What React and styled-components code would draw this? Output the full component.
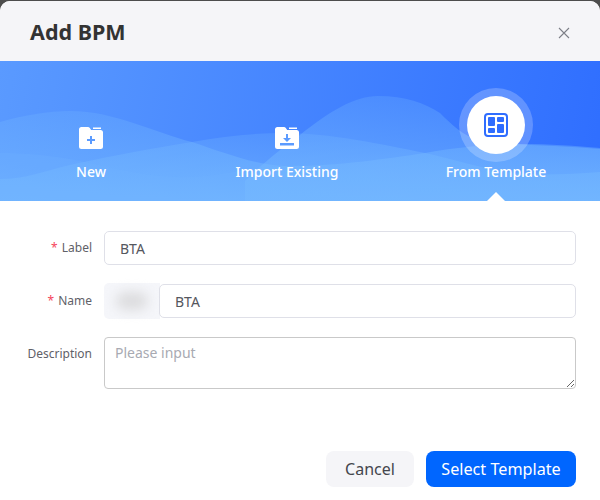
import React from "react";
import styled, { createGlobalStyle } from "styled-components";

const GlobalStyle = createGlobalStyle`
  html, body {
    margin: 0;
    padding: 0;
    height: 100%;
    background: #4d4d4d;
    overflow: hidden;
  }
  * {
    box-sizing: border-box;
  }
`;

const Modal = styled.div`
  margin-top: 1px;
  width: 600px;
  height: 499px;
  display: flex;
  flex-direction: column;
  background: #fff;
  border-radius: 10px 10px 0 0;
  overflow: hidden;
  font-family: "Noto Sans", "Open Sans", sans-serif;
`;

const Header = styled.div`
  height: 60px;
  flex-shrink: 0;
  display: flex;
  align-items: center;
  justify-content: space-between;
  padding: 0 30px;
  background: #f5f5f8;
`;

const Title = styled.div`
  font-size: 21.5px;
  font-weight: 700;
  color: #333;
`;

const Close = styled.svg`
  width: 12px;
  height: 12px;
  margin-top: 3px;
  stroke: #7d7f88;
  stroke-width: 1.1;
  fill: none;
`;

const Banner = styled.div`
  position: relative;
  height: 140px;
  flex-shrink: 0;
  display: grid;
  grid-template-columns: 182px 210px 208px;
  background: linear-gradient(100deg, #5a9aff 0%, #2f6eff 100%);
`;

const Waves = styled.svg`
  position: absolute;
  inset: 0;
  width: 600px;
  height: 140px;
`;

const Tab = styled.div`
  position: relative;
  display: flex;
  flex-direction: column;
  align-items: center;
  justify-content: flex-end;
  padding-bottom: 19px;
  color: #fff;
  font-size: 14px;
  font-weight: 500;
  line-height: 20px;
`;

const FolderIcon = styled.svg`
  width: 24px;
  height: 22px;
  margin-bottom: 13px;
`;

const ActiveCircle = styled.div`
  width: 58px;
  height: 58px;
  margin-bottom: 8px;
  display: flex;
  align-items: center;
  justify-content: center;
  border-radius: 50%;
  background: #fff;
  box-shadow: 0 0 0 8px rgba(255, 255, 255, 0.22);
`;

const Arrow = styled.div`
  position: absolute;
  bottom: 0;
  left: 50%;
  transform: translateX(-50%);
  width: 0;
  height: 0;
  border-left: 9px solid transparent;
  border-right: 9px solid transparent;
  border-bottom: 9px solid #fff;
`;

const Form = styled.div`
  flex: 1;
  display: flex;
  flex-direction: column;
  padding: 30px 24px 13px 0;
`;

const Row = styled.div`
  display: grid;
  grid-template-columns: 92px 1fr;
  column-gap: 12px;
  margin-bottom: 19px;
`;

const Label = styled.label`
  height: 34px;
  padding-bottom: 2px;
  display: flex;
  align-items: center;
  justify-content: flex-end;
  font-size: 12px;
  color: #5f6168;
`;

const Star = styled.span`
  color: #f5455c;
  margin-right: 4px;
`;

const TextInput = styled.input`
  width: 100%;
  height: 34px;
  padding: 0 15px;
  border: 1px solid #dfe0e8;
  border-radius: 5px;
  outline: none;
  background: #fff;
  font-family: inherit;
  font-size: 14px;
  color: #55575e;
`;

const NameGroup = styled.div`
  height: 34px;
  display: flex;
  align-items: center;
`;

const Prefix = styled.div`
  width: 56px;
  height: 36px;
  flex-shrink: 0;
  margin-right: -1px;
  display: flex;
  align-items: center;
  justify-content: center;
  background: #f5f6fa;
  border-radius: 5px 0 0 5px;
`;

const Blurred = styled.div`
  width: 32px;
  height: 18px;
  border-radius: 9px;
  background: #dcdcde;
  filter: blur(6px);
`;

const TextArea = styled.textarea`
  display: block;
  width: 100%;
  height: 52px;
  padding: 5px 10px;
  border: 1px solid #c9c9c9;
  border-radius: 4px;
  outline: none;
  resize: vertical;
  font-family: inherit;
  font-size: 14px;
  color: #55575e;

  &::placeholder {
    color: #a8aab2;
  }
`;

const Footer = styled.div`
  margin-top: auto;
  display: flex;
  justify-content: flex-end;
  gap: 12px;
`;

const Button = styled.button`
  height: 36px;
  padding: 0;
  width: ${(p) => p.$width}px;
  border: none;
  border-radius: 8px;
  font-family: inherit;
  font-size: ${(p) => (p.$primary ? 16.2 : 16)}px;
  background: ${(p) => (p.$primary ? "#0066ff" : "#f5f5f8")};
  color: ${(p) => (p.$primary ? "#fff" : "#44464d")};
`;

const Folder = ({ children }) => (
  <FolderIcon viewBox="0 0 24 22">
    <path
      d="M2.5 0H9c.8 0 1.3.3 1.8 1l1.4 2H21.5A2.5 2.5 0 0 1 24 5.5V19.5A2.5 2.5 0 0 1 21.5 22H2.5A2.5 2.5 0 0 1 0 19.5V2.5A2.5 2.5 0 0 1 2.5 0Z"
      fill="#fff"
    />
    <rect x="14" y="0.5" width="8" height="1.5" fill="#fff" />
    {children}
  </FolderIcon>
);

export default function App() {
  return (
    <>
      <GlobalStyle />
      <Modal>
        <Header>
          <Title>Add BPM</Title>
          <Close viewBox="0 0 12 12">
            <path d="M1 1l10 10M11 1L1 11" />
          </Close>
        </Header>
        <Banner>
          <Waves viewBox="0 0 600 140">
            <defs>
              <linearGradient id="wave" x1="0" y1="0" x2="0" y2="1">
                <stop offset="0" stopColor="#74b8ff" stopOpacity="0.25" />
                <stop offset="1" stopColor="#74b8ff" stopOpacity="0.65" />
              </linearGradient>
            </defs>
            {/* hill on the right */}
            <path
              d="M245 120C265 100 285 85 300 74C330 50 355 35 378 35C405 35 425 42 440 52C452 64 462 74 480 80C520 85 560 84 600 88V140H245Z"
              fill="url(#wave)"
            />
            {/* long wave from the left peak */}
            <path
              d="M0 61C25 54 48 50 70 50C115 50 155 72 192 81C225 92 255 104 285 105C330 106 385 98 425 92C460 86 490 83 520 83C550 83 575 85 600 87V140H0Z"
              fill="url(#wave)"
            />
            {/* wave rising to the middle */}
            <path
              d="M0 118C25 118 45 110 70 104C115 94 155 87 192 81C225 75 255 72 285 72C330 72 385 84 425 92C460 100 490 110 525 113C550 114 575 113 600 111V140H0Z"
              fill="url(#wave)"
            />
            <path
              d="M0 92C25 92 45 94 70 98C100 104 130 112 160 115C190 118 215 115 250 108C265 106 285 105 300 104V140H0Z"
              fill="#74b8ff"
              opacity="0.18"
            />
          </Waves>
          <Tab>
            <Folder>
              <path d="M11 9h2v3h3v2h-3v3h-2v-3H8v-2h3Z" fill="#5b9bff" />
            </Folder>
            New
          </Tab>
          <Tab>
            <Folder>
              <path
                d="M11 7h2v4h3l-4 4-4-4h3ZM5 16h14v2.5H5Z"
                fill="#5b9bff"
              />
            </Folder>
            Import Existing
          </Tab>
          <Tab>
            <ActiveCircle>
              <svg width="24" height="24" viewBox="0 0 24 24">
                <rect x="1" y="1" width="22" height="22" rx="3" fill="none" stroke="#2f6dff" strokeWidth="2" />
                <rect x="4" y="4" width="7" height="9" rx="1" fill="#2f6dff" />
                <rect x="13" y="4" width="7" height="5" rx="1" fill="#2f6dff" />
                <rect x="4" y="15" width="7" height="5" rx="1" fill="#2f6dff" />
                <rect x="13" y="11" width="7" height="9" rx="1" fill="#2f6dff" />
              </svg>
            </ActiveCircle>
            From Template
            <Arrow />
          </Tab>
        </Banner>
        <Form>
          <Row>
            <Label>
              <Star>*</Star>Label
            </Label>
            <TextInput defaultValue="BTA" />
          </Row>
          <Row>
            <Label>
              <Star>*</Star>Name
            </Label>
            <NameGroup>
              <Prefix>
                <Blurred />
              </Prefix>
              <TextInput defaultValue="BTA" />
            </NameGroup>
          </Row>
          <Row>
            <Label>Description</Label>
            <TextArea placeholder="Please input" />
          </Row>
          <Footer>
            <Button $width={88}>Cancel</Button>
            <Button $primary $width={150}>
              Select Template
            </Button>
          </Footer>
        </Form>
      </Modal>
    </>
  );
}
